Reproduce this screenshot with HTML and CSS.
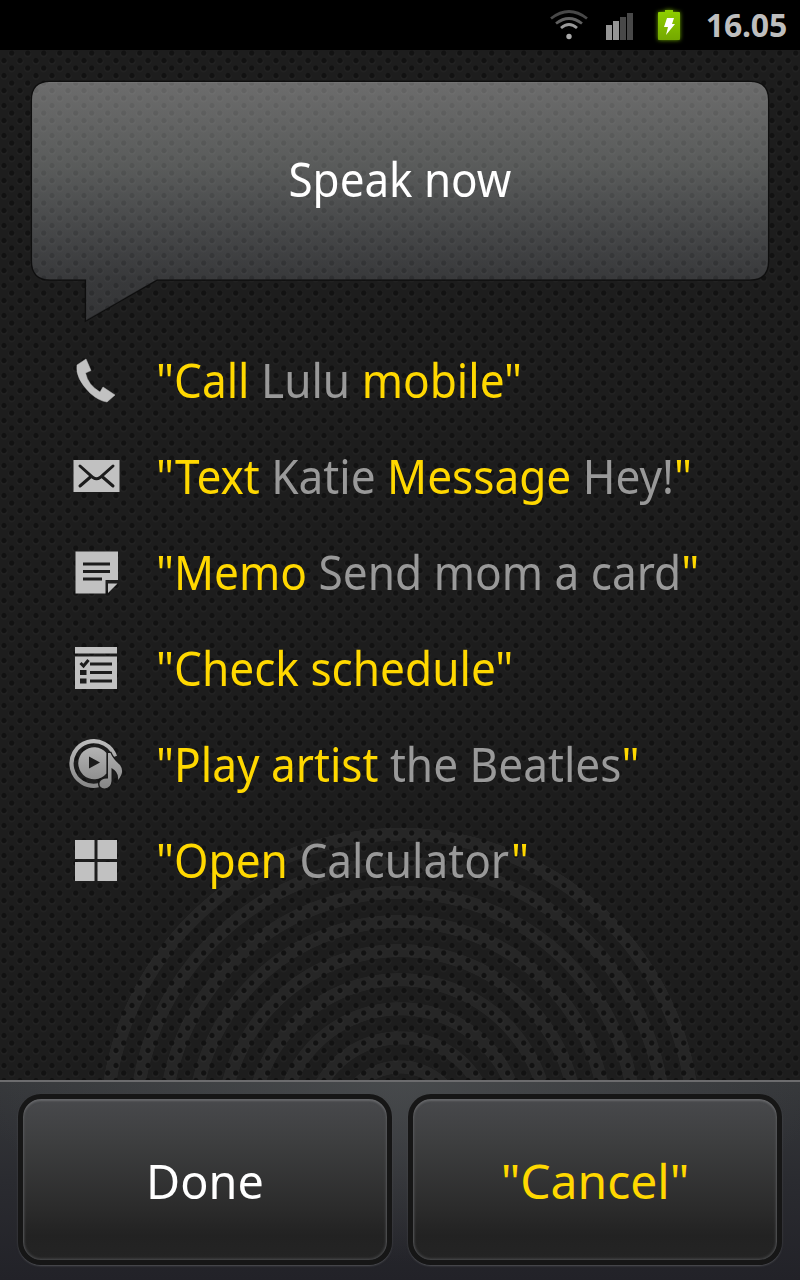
FILE: index.html
```html
<!DOCTYPE html>
<html lang="en">
<head>
  <meta charset="UTF-8">
  <meta name="viewport" content="width=device-width, initial-scale=1.0">
  <title>Speak now</title>
  <link rel="stylesheet" href="styles.css">
</head>
<body>
  <div class="statusbar">
    <svg class="wifi" width="40" height="32" viewBox="0 0 40 32" fill="none" stroke-width="2.8">
      <path d="M2 9.500Q20 -4.500 38 9.500" stroke="#484848"/>
      <path d="M7 14.500Q20 4.500 33 14.500" stroke="#606060"/>
      <path d="M12 19Q20 12 28 19" stroke="#999"/>
      <circle cx="20" cy="27.500" r="2.7" fill="#aaa"/>
    </svg>
    <svg class="signal" width="28" height="28" viewBox="0 0 28 28">
      <path d="M0 13h6v15H0zM7 9h6v19H7z" fill="#959595"/>
      <path d="M14 5h6v23h-6zM21 1h6v27h-6z" fill="#484848"/>
    </svg>
    <svg class="battery" width="24" height="31" viewBox="0 0 24 31">
      <defs>
        <linearGradient id="green" x1="0" y1="0" x2="0" y2="1">
          <stop offset="0" stop-color="#8fd000"/>
          <stop offset="1" stop-color="#74a800"/>
        </linearGradient>
      </defs>
      <path d="M2 2h6V0h8v2h6q1 0 1 1v26q0 1-1 1H2q-1 0-1-1V3q0-1 1-1z" fill="url(#green)"/>
      <path d="M10 8h7l-2 6h3l-9 11 2-8H7z" fill="#fff"/>
    </svg>
    <span class="time">16.05</span>
  </div>

  <div class="voice">
    <div class="bubble">
      <svg class="bubble-shape" width="740" height="244" viewBox="0 0 740 244">
        <defs>
          <linearGradient id="glass" gradientUnits="userSpaceOnUse" x1="0" y1="2" x2="0" y2="242">
            <stop offset="0" stop-color="#fff" stop-opacity=".35"/>
            <stop offset=".35" stop-color="#eef4f2" stop-opacity=".29"/>
            <stop offset=".82" stop-color="#e0e6f2" stop-opacity=".14"/>
            <stop offset="1" stop-color="#dde2f0" stop-opacity=".12"/>
          </linearGradient>
        </defs>
        <path class="edge" d="M20 1.500H720Q738.500 1.500 738.500 20V181Q738.500 200 720 200H127L55.500 241V200H20Q1.500 200 1.500 181V20Q1.500 1.500 20 1.500z"/>
        <path d="M20 2H720Q738 2 738 20V181Q738 199.500 720 199.500H127L56 240.500V199.500H20Q2 199.500 2 181V20Q2 2 20 2z" fill="url(#glass)"/>
        <path d="M18 2.5H722" stroke="#fff" stroke-opacity=".08"/>
      </svg>
      <span class="prompt">Speak now</span>
    </div>

    <ul class="commands">
      <li>
        <svg class="icon" width="56" height="56" viewBox="0 0 56 56">
          <path d="M9 13L18 7L23 18.500L17.500 21Q20 33 32 40L35 35L47 43L39 50Q31 49 22 41Q7 26 9 13z" stroke="#c1c1c1" stroke-width=".5" stroke-linejoin="round"/>
        </svg>
        <span class="text">"Call <i>Lulu</i> mobile"</span>
      </li>
      <li>
        <svg class="icon" width="56" height="56" viewBox="0 0 56 56">
          <path d="M5.500 12h46v32h-46z"/>
          <path class="cut" d="M12 18L25 29.500Q28.500 32 32 29.500L45 18M12 38L23 28.500M45 38L34 28.500" stroke-linecap="round"/>
        </svg>
        <span class="text">"Text <i>Katie</i> Message <i>Hey!</i>"</span>
      </li>
      <li>
        <svg class="icon" width="56" height="56" viewBox="0 0 56 56">
          <path d="M7.500 7.500h42.500v28.500h-12.500v13.500h-30zM40 39.500h9.500L40 49z"/>
          <path class="cut" d="M15 20h27M15 27.500h27M15 35h19"/>
        </svg>
        <span class="text">"Memo <i>Send mom a card</i>"</span>
      </li>
      <li>
        <svg class="icon" width="56" height="56" viewBox="0 0 56 56">
          <path d="M7 7h42v6.500H7zM7 16.500h42V49H7z"/>
          <path class="cut" d="M22 24h22M22 32.500h22M22 41h22M12.500 23l3 3 5-6"/>
          <path class="hole" d="M12 30h6.500v5H12zM12 38.500h6.500v5H12z"/>
        </svg>
        <span class="text">"Check schedule"</span>
      </li>
      <li>
        <svg class="icon music" width="56" height="56" viewBox="0 0 56 56">
          <defs>
            <linearGradient id="silver" gradientUnits="userSpaceOnUse" x1="0" y1="3" x2="0" y2="53">
              <stop offset="0" stop-color="#bdbdbd"/>
              <stop offset="1" stop-color="#858585"/>
            </linearGradient>
          </defs>
          <path d="M30.500 49.300A22.300 22.300 0 1 1 47 20.500" fill="none" stroke="url(#silver)" stroke-width="4.200"/>
          <path d="M38.500 37.500A16 16 0 1 1 38.500 17z" fill="url(#silver)"/>
          <path class="hole" d="M21 20.500v12L32 26.500z"/>
          <path d="M40 17h2.500Q45 23 52 29Q57 36 50 44Q51 36 43.500 32V45Q43 52 36.500 52.500Q31 52 31.500 47Q33 42 40 42.500z" fill="url(#silver)" stroke="#1a1a1a" stroke-width="2.5" paint-order="stroke"/>
        </svg>
        <span class="text">"Play artist <i>the Beatles</i>"</span>
      </li>
      <li>
        <svg class="icon" width="56" height="56" viewBox="0 0 56 56">
          <path d="M7 8h19.500v19H7zM29.500 8H49v19H29.500zM7 30h19.500v19H7zM29.500 30H49v19H29.500z"/>
        </svg>
        <span class="text">"Open <i>Calculator</i>"</span>
      </li>
    </ul>
  </div>

  <div class="buttons">
    <button class="btn"><span>Done</span></button>
    <button class="btn cancel"><span>"Cancel"</span></button>
  </div>
</body>
</html>
```

FILE: styles.css
```css
* {
  box-sizing: border-box;
}

body {
  margin: 0;
  width: 800px;
  height: 1280px;
  overflow: hidden;
  display: flex;
  flex-direction: column;
  background: #000;
  font-family: "Noto Sans", "Open Sans", sans-serif;
}

.statusbar {
  height: 50px;
  display: flex;
  align-items: center;
  justify-content: flex-end;
  padding-right: 13px;
}

.wifi {
  margin-right: 17px;
}

.signal {
  margin: 2px 23px 0 0;
}

.battery {
  margin-right: 25px;
  filter: drop-shadow(0 0 2px #6fa800);
}

.time {
  color: #bebebe;
  font-size: 32px;
  font-weight: bold;
  line-height: 50px;
  letter-spacing: -.2px;
}

/* perforated metal, with the sound waves under the holes */
.voice {
  height: 1030px;
  padding: 30px 30px 0;
  background:
    radial-gradient(circle at 11.7px 3px, #121212 2.1px, transparent 3.2px) 0 0 / 16px 15px,
    radial-gradient(circle at 4px 10.5px, #121212 2.1px, transparent 3.2px) 0 0 / 16px 15px,
    radial-gradient(circle at 11.7px 3.8px, rgba(255, 255, 255, .025) 3px, transparent 4px) 0 0 / 16px 15px,
    radial-gradient(circle at 4px 11.3px, rgba(255, 255, 255, .025) 3px, transparent 4px) 0 0 / 16px 15px,
    radial-gradient(circle at 400px 1078px, transparent 300px, #1d1d1d 300.5px),
    repeating-radial-gradient(circle at 400px 1078px, #262626 0 9px, #1d1d1d 9.7px 25px, #262626 25.7px 29.1px);
}

.bubble {
  position: relative;
  height: 202px;
  display: flex;
  align-items: center;
  justify-content: center;
}

.bubble-shape {
  position: absolute;
  top: 0;
  left: 0;
}

.edge {
  fill: none;
  stroke: #0e0e0e;
  stroke-width: 1.5;
}

.prompt {
  position: relative;
  color: #fff;
  font-size: 46.5px;
  line-height: 60px;
  padding-bottom: 4px;
  transform: scaleX(.945);
}

.commands {
  list-style: none;
  margin: 52px 0 0;
  padding: 0 0 0 38px;
}

.commands li {
  height: 96px;
  display: flex;
  align-items: center;
  gap: 32px;
}

.icon {
  flex: none;
  margin-top: -4px;
  fill: #c1c1c1;
}

.cut {
  fill: none;
  stroke: #1c1c1c;
  stroke-width: 3;
}

.hole {
  fill: #1c1c1c;
}

.text {
  color: #ffd800;
  font-size: 46.5px;
  line-height: 60px;
  padding-bottom: 4px;
  white-space: nowrap;
  transform: scaleX(.95);
  transform-origin: 0 0;
}

.text i {
  color: #999;
  font-style: normal;
}

.buttons {
  height: 200px;
  display: flex;
  gap: 16px;
  padding: 12px 18px 15px;
  border-top: 2px solid #6c6c6e;
  background:
    radial-gradient(ellipse 420px 180px at 50% 0, rgba(78, 81, 83, .7), transparent),
    linear-gradient(#36383b, #2a2b30 50%, #222228);
}

.btn {
  flex: 1;
  padding: 1px 0 0;
  border: 5px solid #161616;
  border-radius: 23px;
  background: linear-gradient(#48494c, #3e3f40 25%, #2b2b2b 68%, #222 85%, #242424) padding-box;
  box-shadow: 0 1px 2px #505155, inset 0 2px 2px #66676a, inset 0 0 3px 1px #505153;
  color: #fff;
  font-family: inherit;
  font-size: 48px;
}

.btn span {
  display: block;
  transform: scaleX(.975);
}

.btn.cancel {
  color: #ffd800;
}

.btn.cancel span {
  transform: none;
}
```
